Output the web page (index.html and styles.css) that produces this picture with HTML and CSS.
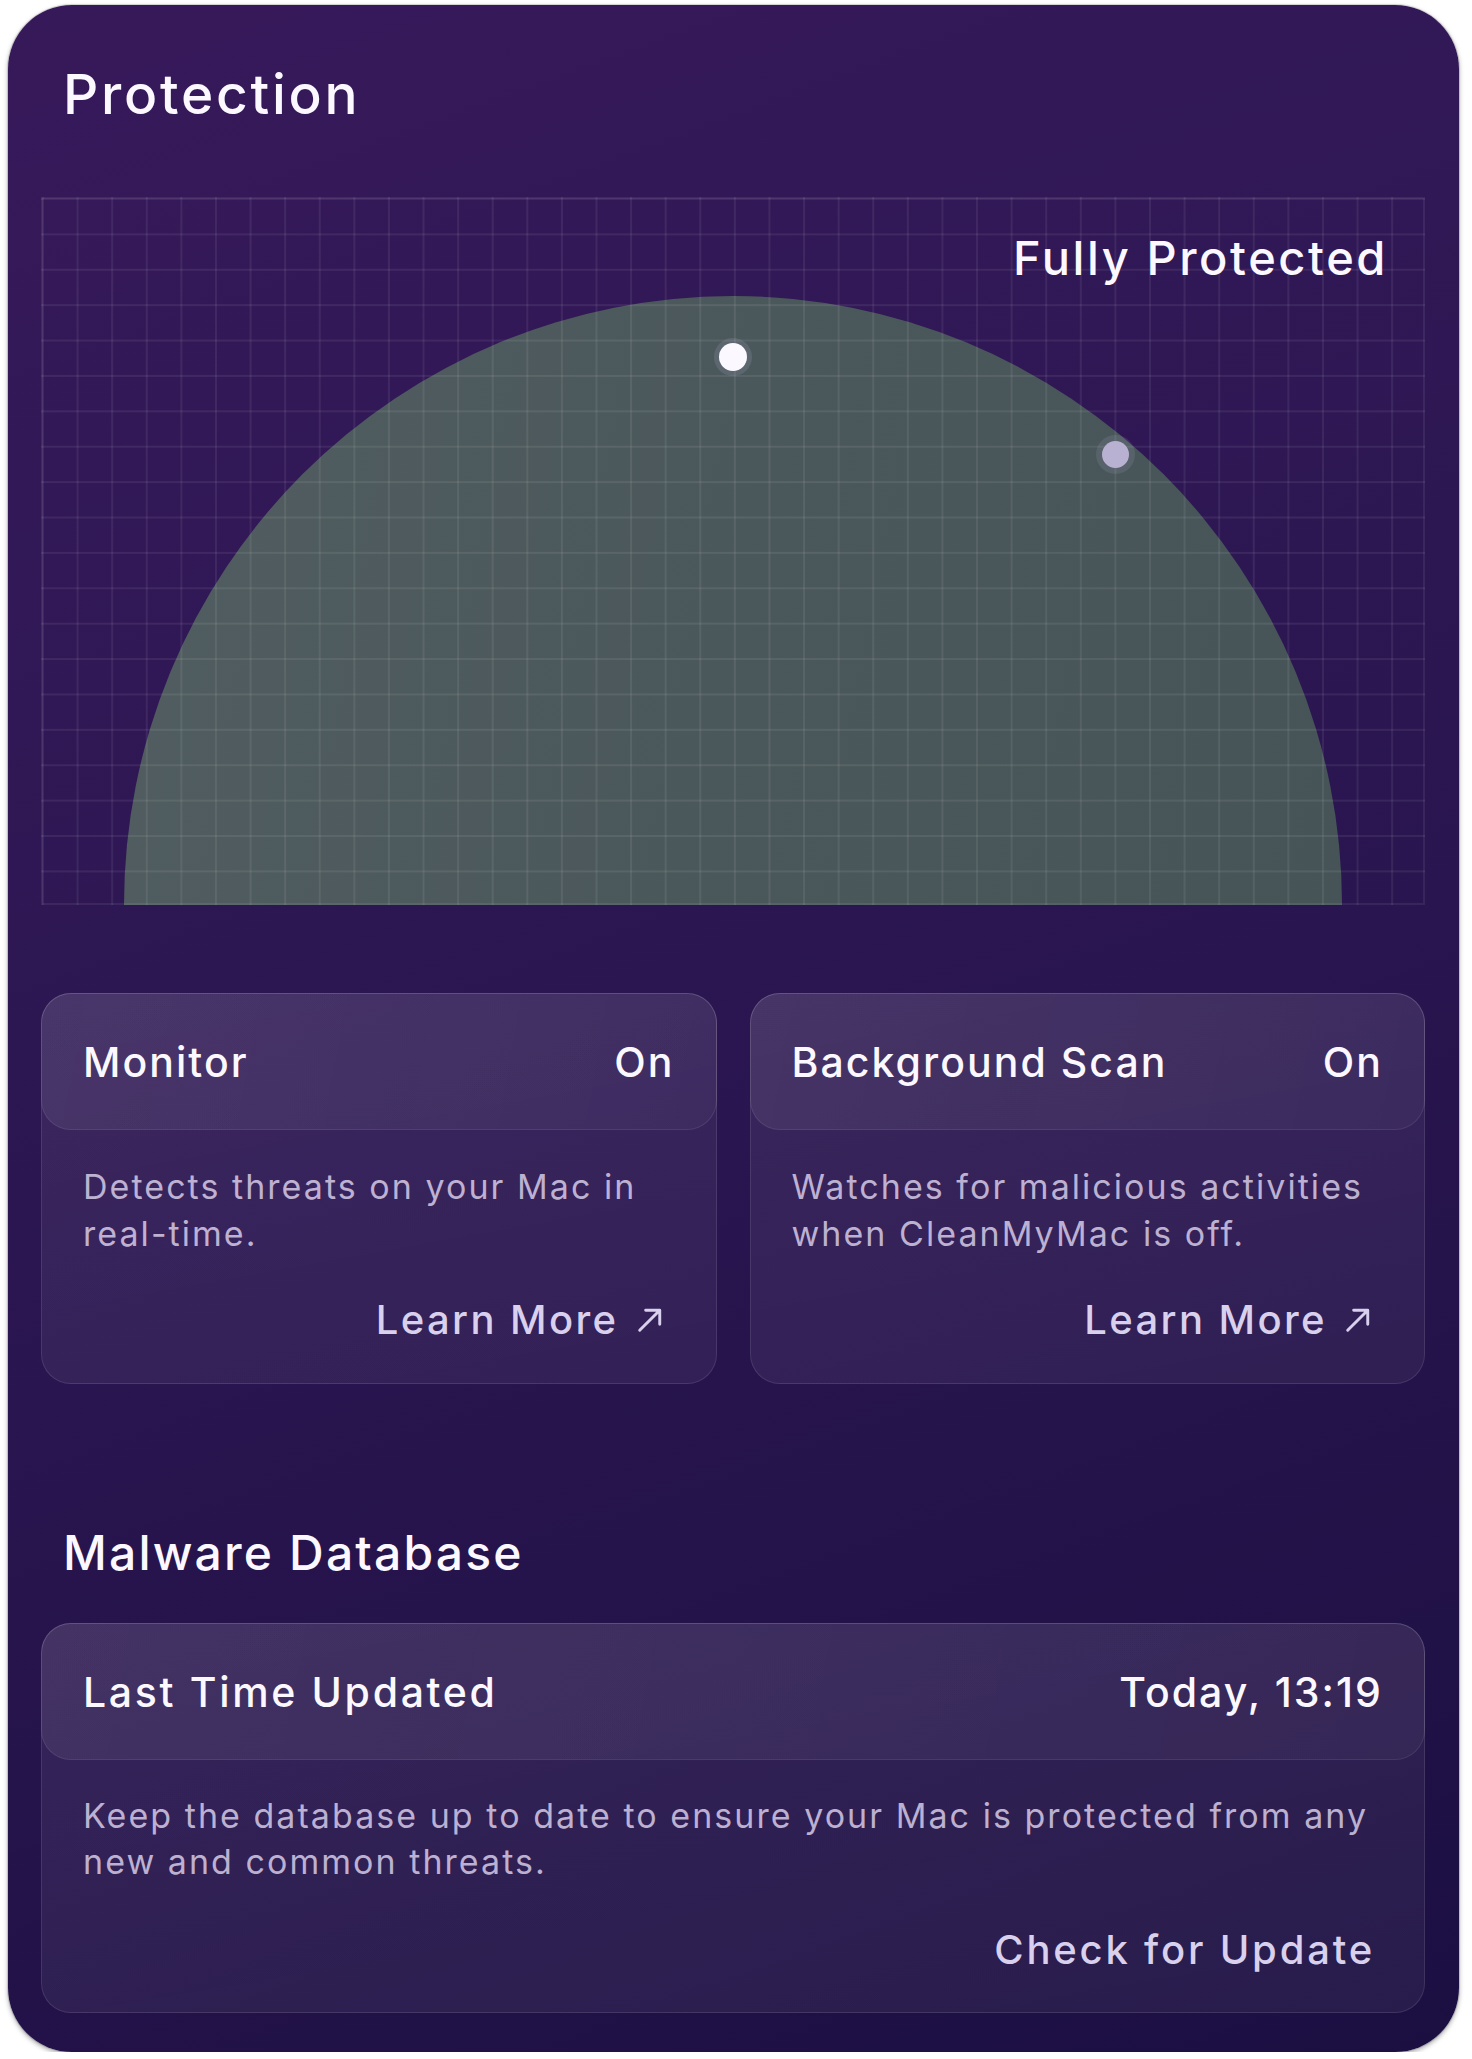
FILE: index.html
```html
<!DOCTYPE html>
<html lang="en">
<head>
<meta charset="utf-8">
<title>Protection</title>
<link rel="stylesheet" href="styles.css">
</head>
<body>
<section class="panel">
  <h1 class="panel-title">Protection</h1>

  <div class="chart">
    <div class="dome"></div>
    <div class="chart-grid"></div>
    <span class="dot dot-main"></span>
    <span class="dot dot-alt"></span>
    <div class="chart-label">Fully Protected</div>
  </div>

  <div class="features">
    <article class="tile">
      <header class="tile-head">
        <span class="tile-name">Monitor</span>
        <span class="tile-value">On</span>
      </header>
      <p class="tile-desc">Detects threats on your Mac in<br>real-time.</p>
      <a class="tile-link" href="#">Learn More
        <svg class="ext-icon" viewBox="0 0 24 24" aria-hidden="true"><path d="M2.5 21.5 L21 3 M8 3 H21 V16"/></svg>
      </a>
    </article>
    <article class="tile">
      <header class="tile-head">
        <span class="tile-name">Background Scan</span>
        <span class="tile-value">On</span>
      </header>
      <p class="tile-desc">Watches for malicious activities<br>when CleanMyMac is off.</p>
      <a class="tile-link" href="#">Learn More
        <svg class="ext-icon" viewBox="0 0 24 24" aria-hidden="true"><path d="M2.5 21.5 L21 3 M8 3 H21 V16"/></svg>
      </a>
    </article>
  </div>

  <h2 class="section-title">Malware Database</h2>

  <article class="tile tile-wide">
    <header class="tile-head">
      <span class="tile-name">Last Time Updated</span>
      <span class="tile-value">Today, 13:19</span>
    </header>
    <p class="tile-desc">Keep the database up to date to ensure your Mac is protected from any<br>new and common threats.</p>
    <a class="tile-link tile-link-plain" href="#">Check for Update</a>
  </article>
</section>
</body>
</html>
```

FILE: styles.css
```css
* { box-sizing: border-box; }

html, body {
  margin: 0;
  padding: 0;
  background: #ffffff;
}

body {
  font-family: "Inter", "Noto Sans", "Liberation Sans", sans-serif;
  color: #fbf8ff;
}

.panel {
  width: 1451px;
  margin: 5px 0 0 8px;
  padding: 57px 34px 39px 33px;
  border-radius: 64px;
  background: linear-gradient(160deg, #37195a 0%, #2d1753 40%, #25134b 70%, #1b0f42 100%);
  box-shadow: 0 0 0 1px rgba(0, 0, 0, 0.12), 0 2px 5px rgba(0, 0, 0, 0.35);
}

.panel-title {
  margin: 0 0 0 22px;
  font-size: 55px;
  line-height: 64px;
  font-weight: 500;
  letter-spacing: 0.05em;
  color: #fbf8ff;
}

/* chart */
.chart {
  position: relative;
  height: 708px;
  margin-top: 71px;
  overflow: hidden;
}

.dome {
  position: absolute;
  left: 83px;
  bottom: 0;
  width: 1218px;
  height: 609px;
  border-radius: 609px 609px 0 0;
  background: linear-gradient(100deg, #515d60 0%, #4b585b 50%, #465458 100%);
}

.chart-grid {
  position: absolute;
  inset: 0;
  border: 2px solid rgba(255, 255, 255, 0.07);
  background-image:
    linear-gradient(to right, rgba(255, 255, 255, 0.07) 2px, transparent 2px),
    linear-gradient(to bottom, rgba(255, 255, 255, 0.07) 2px, transparent 2px);
  background-size: 34.6px 35.4px;
  background-position: -1px -1px;
}

.dot {
  position: absolute;
  border-radius: 50%;
}

.dot-main {
  left: 678px;
  top: 146px;
  width: 28px;
  height: 28px;
  background: #fbf8ff;
  box-shadow: 0 0 0 5px rgba(220, 205, 255, 0.12);
}

.dot-alt {
  left: 1061px;
  top: 244px;
  width: 27px;
  height: 27px;
  background: #b9b1d2;
  box-shadow: 0 0 0 6px rgba(200, 190, 230, 0.12);
}

.chart-label {
  position: absolute;
  top: 37px;
  right: 37px;
  font-size: 47px;
  line-height: 47px;
  font-weight: 500;
  letter-spacing: 0.055em;
  color: #fbf8ff;
}

/* tiles */
.features {
  display: grid;
  grid-template-columns: 1fr 1fr;
  gap: 33px;
  margin-top: 88px;
}

.tile {
  display: flex;
  flex-direction: column;
  border: 1px solid rgba(255, 255, 255, 0.1);
  border-radius: 30px;
  background: linear-gradient(170deg, rgba(255, 255, 255, 0.07) 0%, rgba(255, 255, 255, 0.055) 100%);
}

.tile-head {
  display: flex;
  align-items: center;
  justify-content: space-between;
  height: 137px;
  margin: -1px -1px 0;
  padding: 0 41px 0 41px;
  border: 1px solid rgba(255, 255, 255, 0.08);
  border-radius: 30px;
  background: linear-gradient(100deg, rgba(255, 255, 255, 0.07) 0%, rgba(255, 255, 255, 0.04) 100%);
}

.tile-name,
.tile-value {
  font-size: 41px;
  font-weight: 500;
  letter-spacing: 0.05em;
  color: #fbf8ff;
  line-height: 50px;
}

.tile-desc {
  margin: 33px 30px 0 41px;
  font-size: 34px;
  line-height: 47px;
  font-weight: 400;
  letter-spacing: 0.06em;
  color: rgba(228, 218, 244, 0.78);
}

.tile-link {
  display: flex;
  align-items: center;
  justify-content: flex-end;
  gap: 18px;
  margin: 40px 53px 40px 0;
  font-size: 40px;
  line-height: 46px;
  font-weight: 500;
  letter-spacing: 0.06em;
  color: #d9d0ee;
  text-decoration: none;
}

.ext-icon {
  width: 26px;
  height: 26px;
  fill: none;
  stroke: #d9d0ee;
  stroke-width: 2.7;
  stroke-linecap: round;
  stroke-linejoin: round;
}

.section-title {
  margin: 141px 0 0 22px;
  font-size: 48px;
  line-height: 56px;
  font-weight: 500;
  letter-spacing: 0.045em;
  color: #fbf8ff;
}

.tile-wide {
  margin-top: 42px;
}

.tile-wide .tile-head {
  height: 137px;
  padding-right: 41px;
}

.tile-wide .tile-head .tile-name {
  letter-spacing: 0.065em;
}

.tile-wide .tile-desc {
  line-height: 46px;
}

.tile-link-plain {
  margin: 42px 49px 39px 0;
  letter-spacing: 0.07em;
}
```
